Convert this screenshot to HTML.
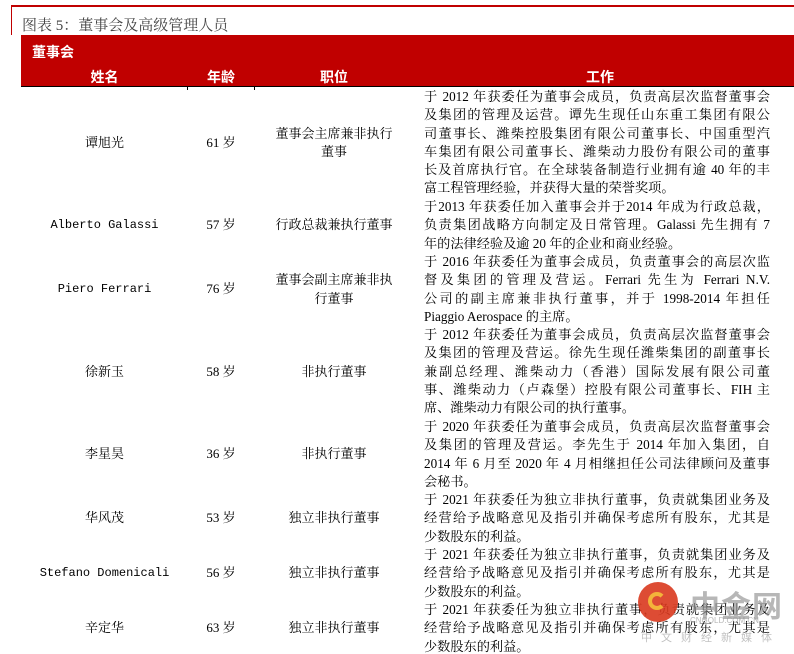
<!DOCTYPE html>
<html><head><meta charset="utf-8"><style>
html,body{margin:0;padding:0;background:#fff;width:794px;height:654px;overflow:hidden;position:relative;font-family:"Liberation Serif","Noto Serif CJK SC",serif;color:#000}
.abs{position:absolute}
.hdr{background:#c00000;color:#fff;font-family:"Liberation Sans","Noto Sans CJK SC",sans-serif;font-weight:bold;font-size:14px}
.row{position:absolute;left:21px;width:773px}
.c{position:absolute;text-align:center;font-size:13px;line-height:18.3px;display:flex;align-items:center;justify-content:center}
.w{position:absolute;left:403px;width:346px;font-size:13.2px;line-height:18.3px}
.w div{text-align:justify;text-align-last:justify;white-space:nowrap;overflow:visible}
.w div.l{text-align-last:left}
.mono{font-family:"Liberation Mono","Noto Serif CJK SC",monospace;font-size:12px}
</style></head><body>
<div class="abs" style="left:11px;top:5px;width:783px;height:2px;background:#c00000"></div>
<div class="abs" style="left:11px;top:5px;width:1px;height:30px;background:#c00000"></div>
<div class="abs" style="left:22px;top:14px;font-size:15px;color:#444;font-family:'Liberation Serif','Noto Serif CJK SC',serif">图表 5：董事会及高级管理人员</div>
<div class="abs hdr" style="left:21px;top:35px;width:773px;height:51px"></div>
<div class="abs hdr" style="left:32px;top:42px;background:none">董事会</div>
<div class="abs hdr" style="left:21px;top:67px;width:167px;text-align:center;background:none">姓名</div>
<div class="abs hdr" style="left:188px;top:67px;width:66px;text-align:center;background:none">年龄</div>
<div class="abs hdr" style="left:254px;top:67px;width:160px;text-align:center;background:none">职位</div>
<div class="abs hdr" style="left:420px;top:67px;width:360px;text-align:center;background:none">工作</div>
<div class="abs" style="left:21px;top:86px;width:773px;height:1px;background:#000"></div>
<div class="abs" style="left:187px;top:86px;width:1px;height:4px;background:#000"></div>
<div class="abs" style="left:254px;top:86px;width:1px;height:4px;background:#000"></div>

<div class="row" style="top:88px;height:110px">
<div class="c" style="left:0;width:167px;height:110px">谭旭光</div>
<div class="c" style="left:167px;width:66px;height:110px">61 岁</div>
<div class="c" style="left:233px;width:160px;height:110px">董事会主席兼非执行<br>董事</div>
<div class="w"><div>于 2012 年获委任为董事会成员，负责高层次监督董事会</div><div>及集团的管理及运营。谭先生现任山东重工集团有限公</div><div>司董事长、潍柴控股集团有限公司董事长、中国重型汽</div><div>车集团有限公司董事长、潍柴动力股份有限公司的董事</div><div>长及首席执行官。在全球装备制造行业拥有逾 40 年的丰</div><div class="l">富工程管理经验，并获得大量的荣誉奖项。</div></div>
</div>
<div class="row" style="top:198px;height:55px">
<div class="c mono" style="left:0;width:167px;height:55px">Alberto Galassi</div>
<div class="c" style="left:167px;width:66px;height:55px">57 岁</div>
<div class="c" style="left:233px;width:160px;height:55px">行政总裁兼执行董事</div>
<div class="w"><div>于2013 年获委任加入董事会并于2014 年成为行政总裁，</div><div>负责集团战略方向制定及日常管理。Galassi 先生拥有 7</div><div class="l">年的法律经验及逾 20 年的企业和商业经验。</div></div>
</div>
<div class="row" style="top:253px;height:73px">
<div class="c mono" style="left:0;width:167px;height:73px">Piero Ferrari</div>
<div class="c" style="left:167px;width:66px;height:73px">76 岁</div>
<div class="c" style="left:233px;width:160px;height:73px">董事会副主席兼非执<br>行董事</div>
<div class="w"><div>于 2016 年获委任为董事会成员，负责董事会的高层次监</div><div>督及集团的管理及营运。Ferrari 先生为 Ferrari N.V.</div><div>公司的副主席兼非执行董事，并于 1998-2014 年担任</div><div class="l">Piaggio Aerospace 的主席。</div></div>
</div>
<div class="row" style="top:326px;height:92px">
<div class="c" style="left:0;width:167px;height:92px">徐新玉</div>
<div class="c" style="left:167px;width:66px;height:92px">58 岁</div>
<div class="c" style="left:233px;width:160px;height:92px">非执行董事</div>
<div class="w"><div>于 2012 年获委任为董事会成员，负责高层次监督董事会</div><div>及集团的管理及营运。徐先生现任潍柴集团的副董事长</div><div>兼副总经理、潍柴动力（香港）国际发展有限公司董</div><div>事、潍柴动力（卢森堡）控股有限公司董事长、FIH 主</div><div class="l">席、潍柴动力有限公司的执行董事。</div></div>
</div>
<div class="row" style="top:418px;height:73px">
<div class="c" style="left:0;width:167px;height:73px">李星昊</div>
<div class="c" style="left:167px;width:66px;height:73px">36 岁</div>
<div class="c" style="left:233px;width:160px;height:73px">非执行董事</div>
<div class="w"><div>于 2020 年获委任为董事会成员，负责高层次监督董事会</div><div>及集团的管理及营运。李先生于 2014 年加入集团，自</div><div>2014 年 6 月至 2020 年 4 月相继担任公司法律顾问及董事</div><div class="l">会秘书。</div></div>
</div>
<div class="row" style="top:491px;height:55px">
<div class="c" style="left:0;width:167px;height:55px">华风茂</div>
<div class="c" style="left:167px;width:66px;height:55px">53 岁</div>
<div class="c" style="left:233px;width:160px;height:55px">独立非执行董事</div>
<div class="w"><div>于 2021 年获委任为独立非执行董事，负责就集团业务及</div><div>经营给予战略意见及指引并确保考虑所有股东，尤其是</div><div class="l">少数股东的利益。</div></div>
</div>
<div class="row" style="top:546px;height:55px">
<div class="c mono" style="left:0;width:167px;height:55px">Stefano Domenicali</div>
<div class="c" style="left:167px;width:66px;height:55px">56 岁</div>
<div class="c" style="left:233px;width:160px;height:55px">独立非执行董事</div>
<div class="w"><div>于 2021 年获委任为独立非执行董事，负责就集团业务及</div><div>经营给予战略意见及指引并确保考虑所有股东，尤其是</div><div class="l">少数股东的利益。</div></div>
</div>
<div class="row" style="top:601px;height:55px">
<div class="c" style="left:0;width:167px;height:55px">辛定华</div>
<div class="c" style="left:167px;width:66px;height:55px">63 岁</div>
<div class="c" style="left:233px;width:160px;height:55px">独立非执行董事</div>
<div class="w"><div>于 2021 年获委任为独立非执行董事，负责就集团业务及</div><div>经营给予战略意见及指引并确保考虑所有股东，尤其是</div><div class="l">少数股东的利益。</div></div>
</div>

<div class="abs" style="left:638px;top:582px;width:40px;height:40px;border-radius:50%;background:#d9381e;opacity:.9"></div>
<div class="abs" style="left:648px;top:592px;width:18px;height:18px;border-radius:50%;border:4px solid #f3b43a;border-right-color:transparent;box-sizing:border-box"></div>
<div class="abs" style="left:690px;top:582px;font-size:30px;font-weight:bold;color:#999;opacity:.7;font-family:'Liberation Sans','Noto Sans CJK SC',sans-serif;letter-spacing:1px">中金网</div>
<div class="abs" style="left:690px;top:616px;font-size:8px;color:#999;opacity:.7;font-family:'Liberation Sans',sans-serif">CNGOLD.COM.CN</div>
<div class="abs" style="left:641px;top:629px;font-size:11px;color:#999;opacity:.6;letter-spacing:9px;font-family:'Liberation Sans','Noto Sans CJK SC',sans-serif">中文财经新媒体</div>
</body></html>
